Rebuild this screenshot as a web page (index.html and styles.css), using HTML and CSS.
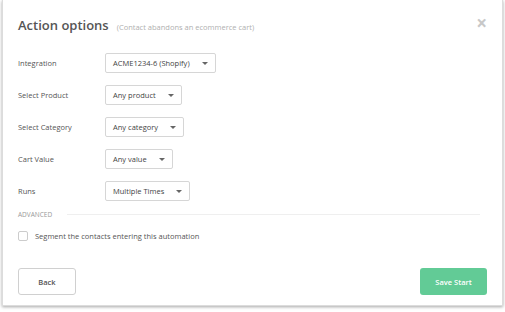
FILE: index.html
```html
<!DOCTYPE html>
<html lang="en">
<head>
    <meta charset="UTF-8">
    <title>Action options</title>
    <link rel="stylesheet" href="styles.css">
</head>
<body>
    <div class="modal">
        <div class="modal-header">
            <h1 class="modal-title">Action options</h1>
            <span class="modal-subtitle">(Contact abandons an ecommerce cart)</span>
            <span class="modal-close">&times;</span>
        </div>
        <div class="modal-body">
            <div class="form-row">
                <label class="form-label">Integration</label>
                <div class="select"><span>ACME1234-6 (Shopify)</span><span class="caret"></span></div>
            </div>
            <div class="form-row">
                <label class="form-label">Select Product</label>
                <div class="select"><span>Any product</span><span class="caret"></span></div>
            </div>
            <div class="form-row">
                <label class="form-label">Select Category</label>
                <div class="select"><span>Any category</span><span class="caret"></span></div>
            </div>
            <div class="form-row">
                <label class="form-label">Cart Value</label>
                <div class="select"><span>Any value</span><span class="caret"></span></div>
            </div>
            <div class="form-row">
                <label class="form-label">Runs</label>
                <div class="select"><span>Multiple Times</span><span class="caret"></span></div>
            </div>
            <div class="section-divider">
                <span>ADVANCED</span>
                <div class="divider-line"></div>
            </div>
            <label class="checkbox-row">
                <span class="checkbox"></span>
                <span>Segment the contacts entering this automation</span>
            </label>
        </div>
        <div class="modal-footer">
            <button class="btn btn-back">Back</button>
            <button class="btn btn-save">Save Start</button>
        </div>
    </div>
</body>
</html>
```

FILE: styles.css
```css
body {
    margin: 0;
    padding: 0 2px 5px 2px;
    background-color: #ffffff;
    font-family: "Open Sans", sans-serif;
}

.modal {
    height: 306px;
    box-sizing: border-box;
    border: 1px solid #dcdcdc;
    border-top: none;
    box-shadow: 0 1px 3px rgba(0, 0, 0, 0.35);
    background-color: #ffffff;
    padding: 0 15px 0 15px;
    display: flex;
    flex-direction: column;
}

.modal-header {
    display: flex;
    align-items: baseline;
    padding-top: 14px;
    height: 33px;
    box-sizing: border-box;
}

.modal-title {
    margin: 0;
    font-size: 13px;
    font-weight: 600;
    color: #555555;
}

.modal-subtitle {
    margin-left: 8px;
    font-size: 7.5px;
    color: #b0b0b0;
}

.modal-close {
    margin-left: auto;
    margin-right: 0;
    font-size: 19px;
    font-weight: 700;
    line-height: 1;
    color: #c8c8c8;
}

.modal-body {
    padding-top: 20px;
    display: flex;
    flex-direction: column;
}

.form-row {
    display: flex;
    align-items: center;
    height: 20px;
    margin-bottom: 12px;
}

.form-label {
    width: 87px;
    font-size: 7.5px;
    color: #555555;
}

.select {
    display: flex;
    align-items: center;
    gap: 12px;
    height: 20px;
    box-sizing: border-box;
    border: 1px solid #d6d6d6;
    border-radius: 2px;
    padding: 0 7px 0 7px;
    font-size: 7.5px;
    color: #444444;
}

.caret {
    width: 0;
    height: 0;
    border-left: 3px solid transparent;
    border-right: 3px solid transparent;
    border-top: 3px solid #666666;
}

.section-divider {
    display: flex;
    align-items: center;
    gap: 15px;
    margin-top: -3px;
    margin-right: 7px;
    font-size: 6.5px;
    color: #999999;
}

.divider-line {
    flex: 1;
    height: 1px;
    background-color: #efefef;
}

.checkbox-row {
    display: flex;
    align-items: center;
    gap: 7px;
    margin-top: 12px;
    font-size: 7.5px;
    color: #555555;
}

.checkbox {
    width: 8px;
    height: 8px;
    border: 1px solid #cccccc;
    border-radius: 2px;
}

.modal-footer {
    display: flex;
    justify-content: space-between;
    margin-top: auto;
    margin-bottom: 10px;
}

.btn {
    height: 27px;
    border-radius: 3px;
    font-family: "Open Sans", sans-serif;
    font-size: 7.5px;
    font-weight: 600;
}

.btn-back {
    width: 58px;
    border: 1px solid #d0d0d0;
    background-color: #ffffff;
    color: #555555;
}

.btn-save {
    width: 67px;
    border: none;
    background-color: #62cb96;
    color: #ffffff;
}
```
